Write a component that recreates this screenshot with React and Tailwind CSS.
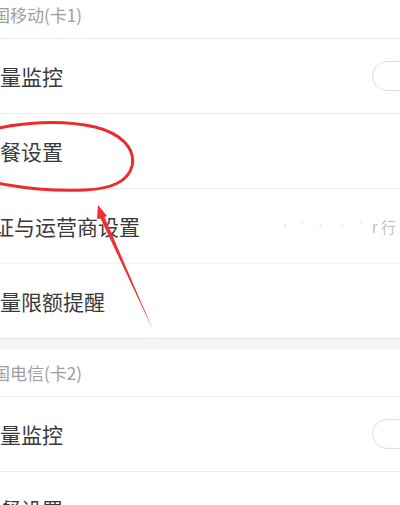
import React from "react";

const rowText = "text-[21px] leading-none text-[#3a3a3a] whitespace-nowrap";

function Header({ label }) {
  return (
    <div className="h-[48px] flex items-center border-b border-[#ececec] bg-white">
      <span className="-ml-[7px] text-[17px] leading-none text-[#9e9e9e] whitespace-nowrap">
        {label}
      </span>
    </div>
  );
}

function Toggle() {
  return (
    <div className="-mr-[26px] ml-auto w-[54px] h-[30px] rounded-full border border-[#dedede] bg-white shadow-[inset_0_0_2px_rgba(0,0,0,0.04)]" />
  );
}

function Row({ label, offset = "", toggle, extra, border = "border-[#ececec]" }) {
  return (
    <div className={`h-[75px] flex items-center border-b ${border} bg-white`}>
      <span className={`${rowText} ${offset}`}>{label}</span>
      {toggle && <Toggle />}
      {extra}
    </div>
  );
}

function FaintValue() {
  // blurred-out carrier value on the right
  return (
    <div className="ml-auto mr-[4px] flex items-center gap-[10px] text-[#cfcfcf] text-[12px] leading-none">
      <span className="opacity-50">·</span>
      <span className="opacity-40">'</span>
      <span className="opacity-50">·</span>
      <span className="opacity-40">·</span>
      <span className="opacity-50">'</span>
      <span className="text-[15px] text-[#a8a8a8] opacity-70">r 行</span>
    </div>
  );
}

export default function App() {
  return (
    <div
      className="relative w-[400px] h-[505px] overflow-hidden bg-white"
      style={{ fontFamily: '"Noto Sans CJK SC", "Noto Sans", sans-serif' }}
    >
      <div className="-mt-[9px]">
        <Header label="国移动(卡1)" />
        <Row label="量监控" toggle />
        <Row label="餐设置" />
        <Row label="证与运营商设置" offset="-ml-[7px]" extra={<FaintValue />} border="border-[#f4f4f4]" />
        <Row label="量限额提醒" border="border-[#e6e6e6]" />
        <div className="h-[10px] bg-[#f5f5f5]" />
        <Header label="国电信(卡2)" />
        <Row label="量监控" toggle />
        <Row label="餐设置" />
      </div>

      {/* red hand-drawn annotation */}
      <svg className="absolute left-0 top-0" width="400" height="505" viewBox="0 0 400 505">
        <path
          d="M -6 129 C 20 123, 60 119, 95 127 C 120 133, 136 148, 132 166 C 128 182, 110 189, 85 190 C 55 191, 25 188, 8 185 C 2 184, -2 183, -6 182"
          fill="none"
          stroke="#ee2a2a"
          strokeWidth="3"
          strokeLinecap="round"
        />
        <polygon points="98,205 107,216 104.5,217 153,330 100.5,218.5 97,219" fill="#f03030" />
      </svg>
    </div>
  );
}
